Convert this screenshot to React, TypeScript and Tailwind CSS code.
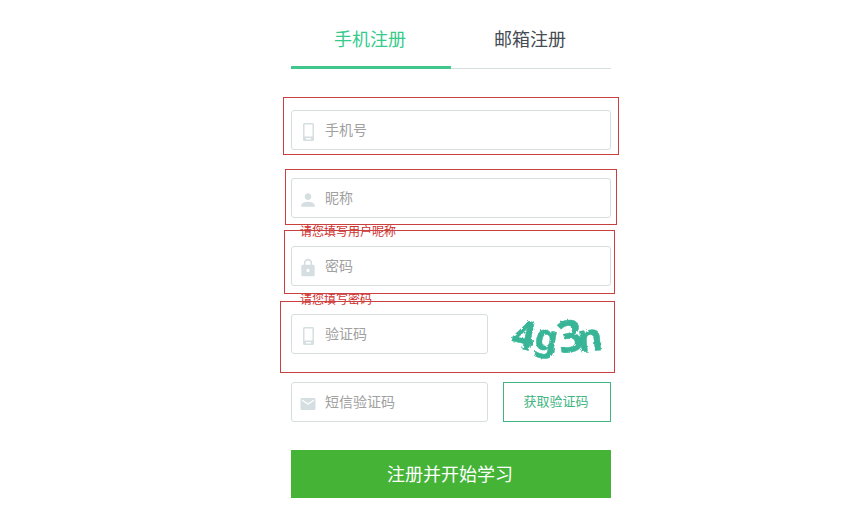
import React from "react";
import clsx from "clsx";
import { MdEmail, MdLock, MdPerson } from "react-icons/md";

interface FieldProps {
  id: string;
  label: string;
  icon: React.ReactNode;
  type?: string;
}

const PhoneIcon: React.FC = () => (
  <svg width="20" height="20" viewBox="0 0 20 20" aria-hidden="true">
    <path
      fill="currentColor"
      fillRule="evenodd"
      d="M6.500 1h8a1.500 1.500 0 0 1 1.500 1.500v15a1.500 1.500 0 0 1-1.500 1.500h-8a1.500 1.500 0 0 1-1.500-1.500v-15A1.500 1.500 0 0 1 6.500 1zM6.500 2.500V14.500H14.500V2.500zM8 16v1.500h5V16z"
    />
  </svg>
);

const Field: React.FC<FieldProps> = ({ id, label, icon, type = "text" }) => (
  <label
    htmlFor={id}
    className="flex h-10 min-w-0 flex-1 items-center gap-[7px] rounded-[3px] border border-[#d6dddd] bg-white pl-1.5 pr-2"
  >
    <span className="flex w-5 shrink-0 justify-center pt-1 text-[#d5dee0]">
      {icon}
    </span>
    <input
      id={id}
      type={type}
      placeholder={label}
      aria-label={label}
      className="w-full min-w-0 bg-transparent pb-0.5 text-sm text-gray-700 outline-none placeholder:text-[#a0a0a0]"
    />
  </label>
);

interface RowProps {
  outline?: string;
  hint?: string;
  children: React.ReactNode;
}

// The hint lives in the 28px strip under the field, the outline is laid over the row.
const Row: React.FC<RowProps> = ({ outline, hint, children }) => (
  <div>
    <div className="relative flex gap-[15px]">
      {children}
      {outline && (
        <div
          className={clsx(
            "pointer-events-none absolute border border-[#c9403f]",
            outline
          )}
        />
      )}
    </div>
    <p className="h-7 pl-[9px] text-xs leading-[26px] text-[#d0302f]">
      {hint}
    </p>
  </div>
);

const Captcha: React.FC = () => (
  <button type="button" aria-label="4g3n" className="h-10 w-[108px] shrink-0">
    <svg
      width="108"
      height="64"
      viewBox="0 -12 108 64"
      className="-my-3 overflow-visible"
    >
      <defs>
        <filter id="rough" x="-10%" y="-10%" width="120%" height="120%">
          <feTurbulence
            type="fractalNoise"
            baseFrequency="0.3"
            numOctaves="2"
            seed="4"
            result="noise"
          />
          <feDisplacementMap in="SourceGraphic" in2="noise" scale="3" />
        </filter>
      </defs>
      <g
        filter="url(#rough)"
        fill="#38b596"
        stroke="#38b596"
        strokeWidth="0.5"
        fontFamily="'Noto Sans', sans-serif"
        fontWeight="700"
      >
        <text x="9" y="35" fontSize="40" transform="rotate(12 20 24)">4</text>
        <text x="31" y="36" fontSize="36" transform="rotate(10 42 30)">g</text>
        <text x="55" y="38" fontSize="44" transform="rotate(-10 66 24)">3</text>
        <text x="75" y="37" fontSize="38" transform="rotate(-6 88 28)">n</text>
      </g>
    </svg>
  </button>
);

const tabs = [
  { name: "手机注册", active: true },
  { name: "邮箱注册", active: false },
];

const App: React.FC = () => {
  return (
    <main className="flex justify-center bg-white pb-8 pl-[47px] pt-3 font-['Noto_Sans_CJK_SC',sans-serif]">
      <form className="w-80">
        <div role="tablist" className="mb-[41px] flex items-end">
          {tabs.map((tab) => (
            <button
              key={tab.name}
              type="button"
              role="tab"
              aria-selected={tab.active}
              className={clsx(
                "h-[57px] flex-1 pr-0.5 text-lg",
                tab.active
                  ? "border-b-[3px] border-[#3fc78d] pb-0.5 text-[#35cb8b]"
                  : "border-b border-[#d9dedf] pb-1 text-[#444b53]"
              )}
            >
              {tab.name}
            </button>
          ))}
        </div>

        <Row outline="-left-2 -right-2 -top-[13px] -bottom-[5px]">
          <Field id="phone" label="手机号" icon={<PhoneIcon />} type="tel" />
        </Row>
        <Row
          outline="-left-1.5 -right-1.5 -top-[9px] -bottom-[7px]"
          hint="请您填写用户昵称"
        >
          <Field id="nickname" label="昵称" icon={<MdPerson size={20} />} />
        </Row>
        <Row
          outline="-left-[7px] -right-1 -top-4 -bottom-2"
          hint="请您填写密码"
        >
          <Field
            id="password"
            label="密码"
            icon={<MdLock size={20} />}
            type="password"
          />
        </Row>
        <Row outline="-left-[11px] -right-1 -top-[13px] -bottom-[19px]">
          <Field id="captcha" label="验证码" icon={<PhoneIcon />} />
          <Captcha />
        </Row>
        <Row>
          <Field id="sms" label="短信验证码" icon={<MdEmail size={18} />} />
          <button
            type="button"
            className="h-10 w-[108px] shrink-0 border border-[#3fb57f] pb-0.5 pr-0.5 text-[13px] text-[#3fb57f]"
          >
            获取验证码
          </button>
        </Row>

        <button
          type="submit"
          className="h-12 w-full bg-[#44b336] pb-0.5 pr-0.5 text-lg text-white"
        >
          注册并开始学习
        </button>
      </form>
    </main>
  );
};

export default App;
